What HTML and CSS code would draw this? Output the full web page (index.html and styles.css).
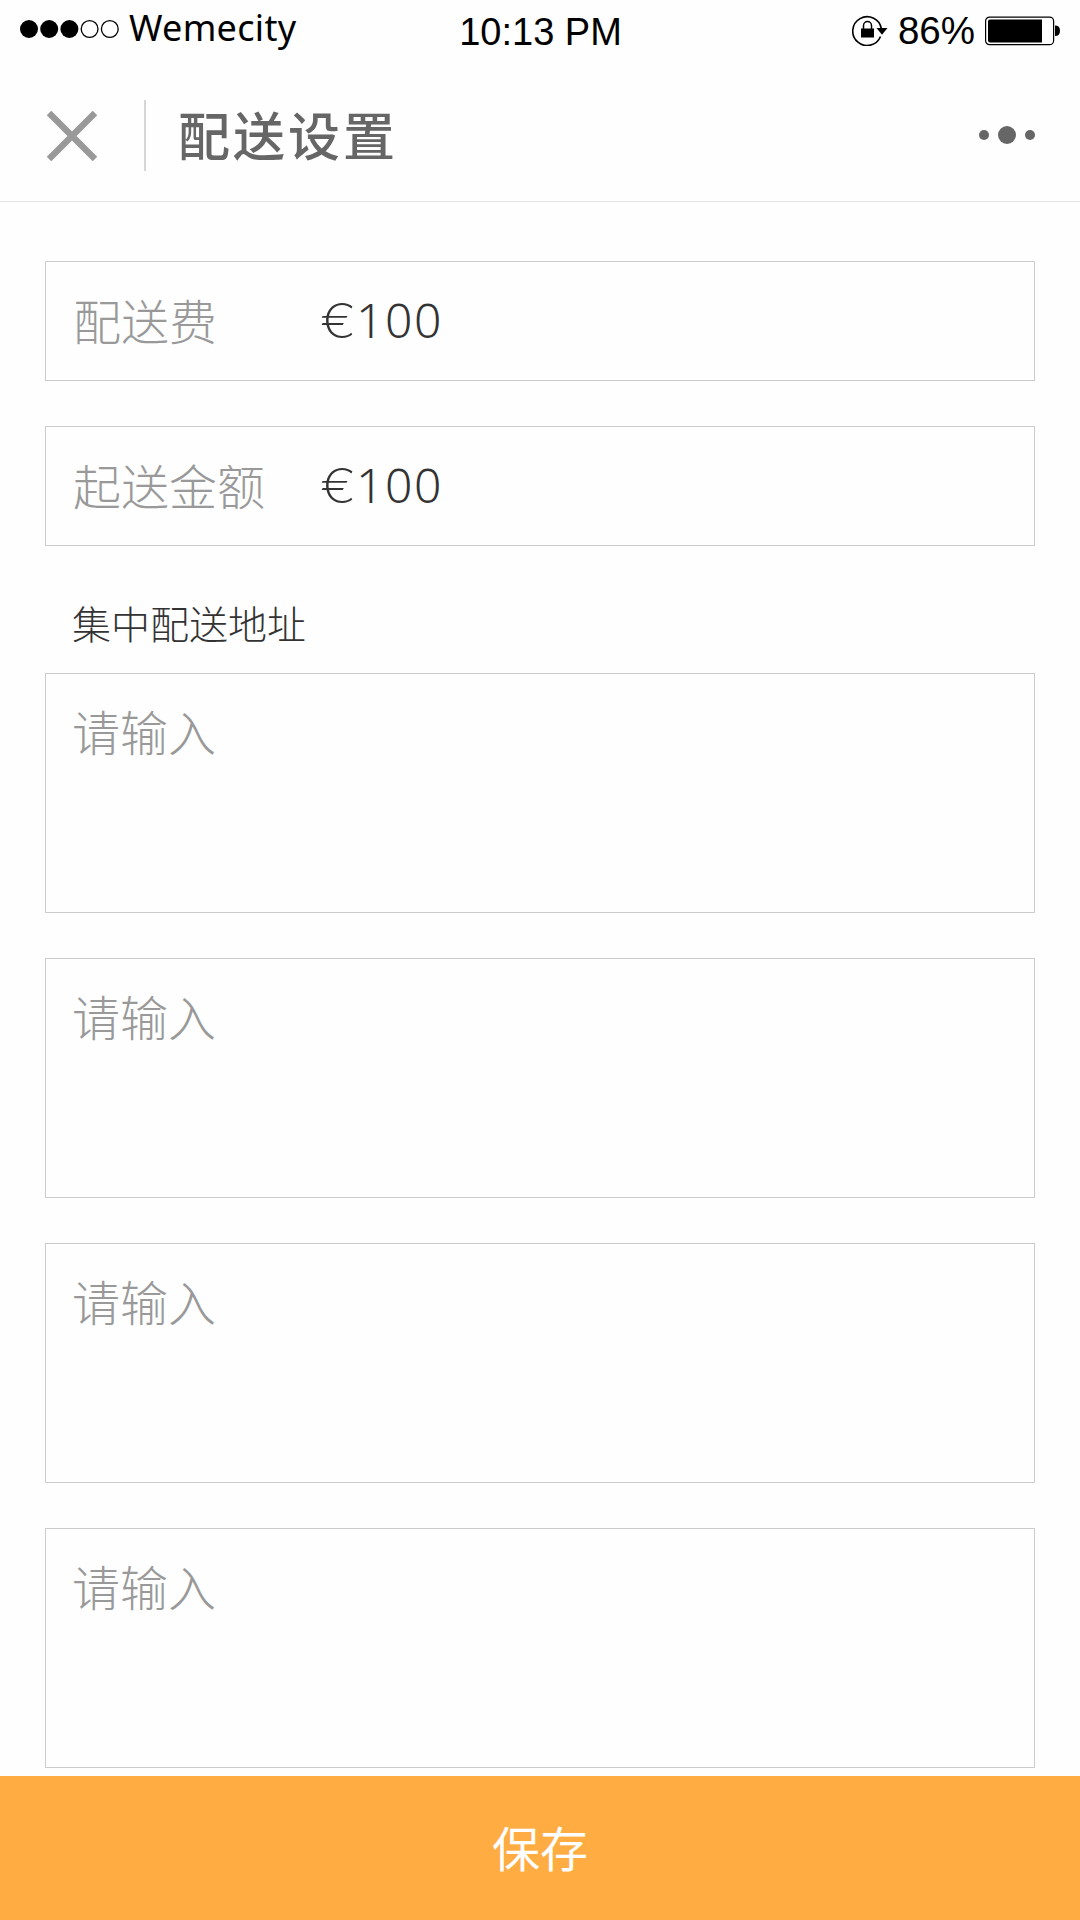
FILE: index.html
```html
<!DOCTYPE html>
<html lang="zh-CN">
<head>
<meta charset="utf-8">
<title>配送设置</title>
<link rel="stylesheet" href="styles.css">
</head>
<body>
<div class="screen">
  <div class="status">
    <div class="carrier">
      <svg class="signal" width="100" height="20" viewBox="0 0 100 20">
        <circle cx="9" cy="10" r="9"/><circle cx="29.2" cy="10" r="9"/><circle cx="49.4" cy="10" r="9"/>
        <circle class="empty" cx="69.6" cy="10" r="8.4"/><circle class="empty" cx="89.8" cy="10" r="8.4"/>
      </svg>
      <span class="carrier-name">Wemecity</span>
    </div>
    <span class="time">10:13 PM</span>
    <div class="power">
      <svg class="lock" width="36" height="32" viewBox="0 0 36 32">
        <path class="ring" d="M28.5 22.5A14.4 14.4 0 1 1 29.3 14.5"/>
        <path d="M24.5 14H35.5L30 20.8Z"/>
        <rect x="9" y="14.5" width="13" height="9"/>
        <path class="shackle" d="M11.5 15V11.5a4 4 0 0 1 8 0V15"/>
      </svg>
      <span class="percent">86%</span>
      <svg class="battery" width="76" height="30" viewBox="0 0 76 30">
        <rect class="case" x=".6" y="1.1" width="68" height="27.6" rx="4"/>
        <path d="M5 3.5H57V26.5H5Q3 26.5 3 24.5V5.5Q3 3.5 5 3.5Z"/>
        <path d="M70 9.5Q75 9.5 75 14.7T70 20Z"/>
      </svg>
    </div>
  </div>
  <header class="header">
    <svg class="close" width="50" height="50" viewBox="0 0 50 50"><path d="M2 2L48 48M48 2L2 48"/></svg>
    <span class="divider"></span>
    <h1 class="title">配送设置</h1>
    <svg class="more" width="56" height="18" viewBox="0 0 56 18"><circle cx="5" cy="9" r="5"/><circle cx="28" cy="9" r="9"/><circle cx="51" cy="9" r="5"/></svg>
  </header>
  <main class="form">
    <div class="field"><span class="label">配送费</span><span class="value"><span class="currency">€</span>100</span></div>
    <div class="field"><span class="label">起送金额</span><span class="value"><span class="currency">€</span>100</span></div>
    <h2 class="section">集中配送地址</h2>
    <div class="address">请输入</div>
    <div class="address">请输入</div>
    <div class="address">请输入</div>
    <div class="address">请输入</div>
  </main>
  <button class="save">保存</button>
</div>
</body>
</html>
```
FILE: styles.css
```css
* { box-sizing: border-box; }
body { margin: 0; background: #fefefe; font-family: "Noto Sans CJK SC", sans-serif; }
.screen { width: 1080px; height: 1920px; display: flex; flex-direction: column; overflow: hidden; }
.status { height: 60px; flex: none; display: grid; grid-template-columns: 1fr auto 1fr; padding: 0 19px 0 20px; color: #000; white-space: nowrap; }
.carrier { display: flex; align-items: flex-start; }
.signal { margin-top: 19px; }
.signal .empty { fill: none; stroke: #000; stroke-width: 1.3; }
.carrier-name { font: 400 36px/50px "Noto Sans", sans-serif; margin: 3px 0 0 9px; letter-spacing: .3px; }
.time { font: 38px/44px "Liberation Sans", sans-serif; margin-top: 10px; }
.power { display: flex; justify-content: flex-end; }
.lock { margin: 14px 10px 0 0; }
.ring, .shackle, .case { fill: none; stroke: #000; }
.ring { stroke-width: 1.6; }
.shackle { stroke-width: 1.5; }
.case { stroke-width: 1.2; }
.percent { font: 38.5px/44px "Liberation Sans", sans-serif; margin-top: 9px; }
.battery { margin: 16px 0 0 10px; }
.header { height: 142px; flex: none; display: flex; align-items: flex-start; padding: 0 45px 0 47px; border-bottom: 1px solid #e2e2e2; }
.close { margin-top: 51px; }
.close path { stroke: #999; stroke-width: 6.5; }
.divider { width: 2px; height: 71px; margin: 40px 32px 0 47px; background: #d6d6d6; }
.title { margin: 34px auto 0 0; font-size: 52px; line-height: 80px; font-weight: 500; letter-spacing: 3px; color: #666; }
.more { margin-top: 66px; fill: #666; }
.form { flex: 1; min-height: 0; overflow: hidden; padding: 59px 45px 0; }
.field { height: 120px; display: flex; align-items: center; border: 1px solid #ccc; margin-bottom: 45px; padding: 0 0 4px 27px; font-size: 48px; font-weight: 300; }
.label { width: 247px; color: #999; }
.value { display: flex; align-items: baseline; padding-top: 3px; font-family: "Noto Sans", sans-serif; letter-spacing: 1.6px; line-height: 66px; color: #333; }
.currency { width: 36px; font: 200 48px/66px Inter, sans-serif; letter-spacing: 0; transform: scaleX(1.12); transform-origin: left; }
.section { margin: 0 0 19px; padding-left: 27px; font-size: 39px; line-height: 63px; font-weight: 300; color: #333; }
.address { height: 240px; border: 1px solid #ccc; margin-bottom: 45px; padding: 21px 26px; font-size: 48px; line-height: 71px; font-weight: 300; color: #999; }
.save { height: 144px; flex: none; border: 0; padding: 0 0 4px; background: #ffac42; color: #fff; font: 400 48px/70px "Noto Sans CJK SC", sans-serif; }
```
